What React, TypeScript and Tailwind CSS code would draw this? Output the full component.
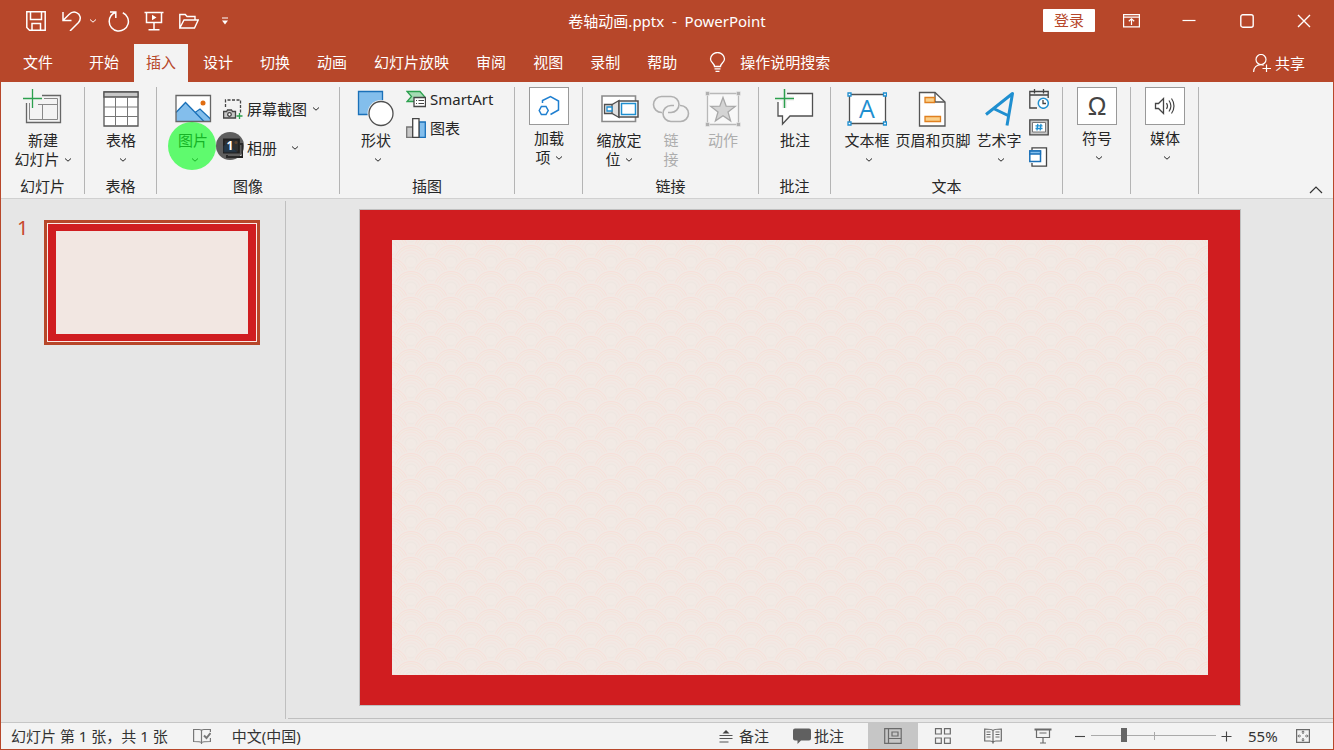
import { useState } from 'react';
import type { ReactNode } from 'react';

const TABS = ['开始', '插入', '设计', '切换', '动画', '幻灯片放映', '审阅', '视图', '录制', '帮助'];

function Chevron() {
  return (
    <svg className="inline-block h-1.5 w-2 shrink-0" viewBox="0 0 8 6" fill="none" stroke="currentColor" strokeWidth="1">
      <path d="M1 1.500 4 4.200 7 1.500" />
    </svg>
  );
}

function LargeIcon({ children }: { children: ReactNode }) {
  return (
    <svg className="h-[38px] w-10 shrink-0" viewBox="0 0 40 38" fill="none" stroke="#505050" strokeWidth="1.300">
      {children}
    </svg>
  );
}

function SmallIcon({ children }: { children: ReactNode }) {
  return (
    <svg className="h-5 w-5 shrink-0" viewBox="0 0 20 20" fill="none" stroke="#444" strokeWidth="1.300">
      {children}
    </svg>
  );
}

function Group({ label, className, children }: { label?: string; className: string; children: ReactNode }) {
  return (
    <section className={`relative flex h-[107px] shrink-0 flex-col border-r border-[#b4b4b4] ${className}`}>
      <div className="flex flex-1 items-start">{children}</div>
      {label && <h2 className="absolute inset-x-0 bottom-0 text-center leading-4">{label}</h2>}
    </section>
  );
}

function LargeButton({
  icon,
  label,
  second,
  menu,
  boxed,
  disabled,
  className = 'w-14',
}: {
  icon: ReactNode;
  label: string;
  second?: string;
  menu?: boolean;
  boxed?: boolean;
  disabled?: boolean;
  className?: string;
}) {
  return (
    <button
      disabled={disabled}
      className={`flex shrink-0 flex-col items-center whitespace-nowrap leading-[19px] disabled:text-[#adadad] ${boxed ? '' : 'pt-0.5'} ${className}`}
    >
      {boxed ? <span className="flex border border-[#999] bg-white">{icon}</span> : icon}
      <span className="mt-1">{label}</span>
      {(second || menu) && (
        <span className={`flex h-[19px] items-center gap-1 ${second ? '' : 'pl-1'}`}>
          {second}
          {menu && <Chevron />}
        </span>
      )}
    </button>
  );
}

function SmallButton({ icon, label, className = '' }: { icon: ReactNode; label: string; className?: string }) {
  return (
    <button className={`flex items-center gap-1 whitespace-nowrap ${className}`}>
      {icon}
      <span>{label}</span>
    </button>
  );
}

function TitleBar() {
  return (
    <header className="grid h-[43px] grid-cols-[1fr_auto_1fr] items-center pb-1">
      <div className="flex items-center pl-[25px]">
        <button aria-label="保存">
          <svg className="h-5 w-5" viewBox="0 0 20 20" fill="none" stroke="#fff" strokeWidth="1.500">
            <path d="M.8.8H19.2V19.2H3.5L.8 16.5ZM4.500 1v7.500h11V1M6 19v-6.500h8.500V19" />
          </svg>
        </button>
        <button aria-label="撤消" className="ml-4">
          <svg className="h-5 w-5" viewBox="0 0 20 20" fill="none" stroke="#fff" strokeWidth="1.500">
            <path d="M1 1v8.500h8.500M1.500 9 7 3.500C9 1.500 12 .6 14.500 1.600 18.500 3.200 19.500 8 16.500 11.500L8 20" />
          </svg>
        </button>
        <button aria-label="撤消列表" className="ml-[7px] flex text-white">
          <Chevron />
        </button>
        <button aria-label="恢复" className="ml-[11px]">
          <svg className="h-[22px] w-[22px]" viewBox="0 0 22 22" fill="none" stroke="#fff" strokeWidth="1.500">
            <path d="M2 2h5.800v6M7.500 2.500C3.500 4 1.200 7.500 1.200 11.500a9.600 9.600 0 1 0 13.600-8.800" />
          </svg>
        </button>
        <button aria-label="从头开始" className="ml-3.5">
          <svg className="h-5 w-5" viewBox="0 0 20 20" fill="none" stroke="#fff" strokeWidth="1.500">
            <path d="M.5 1.500h19M2.500 2v9.500h15V2M10 11.500v7M4.500 18.800h11" />
            <path d="M8 3.800v5.400L12.500 6.500Z" fill="#fff" stroke="none" />
          </svg>
        </button>
        <button aria-label="打开" className="ml-[15px]">
          <svg className="h-5 w-5" viewBox="0 0 20 20" fill="none" stroke="#fff" strokeWidth="1.400">
            <path d="M.8 17V3.500h5.500L8 5.500h8V9M.8 17 5 9h14.200l-3.700 8Z" />
          </svg>
        </button>
        <button aria-label="自定义快速访问工具栏" className="ml-[22px]">
          <svg className="h-2 w-2" viewBox="0 0 8 8">
            <path d="M1 .5h6v1H1zM1 3.500h6L4 7.500Z" fill="#fff" />
          </svg>
        </button>
      </div>
      <h1 className="whitespace-pre">{'卷轴动画.pptx  -  PowerPoint'}</h1>
      <div className="flex items-center justify-end pr-[22px]">
        <button className="mr-7 h-[23px] w-[52px] rounded-[1px] bg-white leading-[23px] text-[#b7472a]">登录</button>
        <button aria-label="功能区显示选项" className="mr-[42px]">
          <svg className="h-4 w-[17px]" viewBox="0 0 17 16" fill="none" stroke="#fff" strokeWidth="1.200">
            <path d="M.6 1.600h15.800v12.300H.6ZM.6 4.200h15.800M8.500 12V6M5.800 8.300 8.500 5.800l2.700 2.500" />
          </svg>
        </button>
        <button aria-label="最小化" className="mr-11">
          <svg className="h-3.5 w-3.5" viewBox="0 0 14 14" stroke="#fff" strokeWidth="1.200">
            <path d="M.5 6.500h13" />
          </svg>
        </button>
        <button aria-label="最大化" className="mr-[43px]">
          <svg className="h-3.5 w-3.5" viewBox="0 0 14 14" fill="none" stroke="#fff" strokeWidth="1.400">
            <rect x=".8" y=".8" width="12.400" height="12.400" rx="2" />
          </svg>
        </button>
        <button aria-label="关闭">
          <svg className="h-3.5 w-3.5" viewBox="0 0 14 14" stroke="#fff" strokeWidth="1.400">
            <path d="m1 1 12 12M13 1 1 13" />
          </svg>
        </button>
      </div>
    </header>
  );
}

function TabBar({ active, onSelect }: { active: string; onSelect: (tab: string) => void }) {
  return (
    <nav className="flex h-[38px] items-stretch gap-[3px] whitespace-nowrap pl-2.5 pr-7">
      <button className="mr-[9px] px-3 pb-0.5">文件</button>
      {TABS.map((tab) => (
        <button
          key={tab}
          onClick={() => onSelect(tab)}
          className={`px-3 pb-0.5 ${tab === active ? 'bg-[#f3f3f3] text-[#b7472a]' : ''}`}
        >
          {tab}
        </button>
      ))}
      <button className="ml-[17px] flex items-center gap-3.5 pb-0.5">
        <svg className="h-5 w-[17px]" viewBox="0 0 17 20" fill="none" stroke="#fff" strokeWidth="1.300">
          <path d="M5.500 14.500C5.500 11.500 1.500 10.500 1.500 7a7 6.500 0 0 1 14 0c0 3.500-4 4.500-4 7.500ZM5.500 16.800h6M6.500 19.300h4" />
        </svg>
        操作说明搜索
      </button>
      <button className="ml-auto flex items-center gap-1">
        <svg className="h-[18px] w-[18px]" viewBox="0 0 18 18" fill="none" stroke="#fff" strokeWidth="1.200">
          <circle cx="8" cy="5.500" r="5" />
          <path d="M.6 18c0-4.500 3-7.300 7.400-7.300 1 0 2 .2 2.700.5M9.500 14.500H18M13.500 10.500V18" />
        </svg>
        共享
      </button>
    </nav>
  );
}

function Ribbon() {
  return (
    <div className="flex h-[117px] border-b border-[#d0d0d0] bg-[#f3f3f3] pt-[5px] text-[#262626]">
      <Group label="幻灯片" className="w-[84px] pl-1">
        <LargeButton
          className="w-[76px]"
          label="新建"
          second="幻灯片"
          menu
          icon={
            <LargeIcon>
              <path d="M19 6.500h18.500v27h-34V14" stroke="#666" />
              <path d="M21 9.500h13.500v21h-28V14M15 15.500h20M19.500 15.500v15" stroke="#888" strokeWidth="1" />
              <path d="M9.500 0v19M0 9.500h19" stroke="#2ca04e" />
            </LargeIcon>
          }
        />
      </Group>
      <Group label="表格" className="w-[72px] pl-2">
        <LargeButton
          label="表格"
          menu
          icon={
            <LargeIcon>
              <path d="M3 3h34v34H3Z" fill="#fff" stroke="#555" />
              <path d="M3 3h34v5H3Z" fill="#c8c8c8" stroke="#555" />
              <path d="M3 18h34M3 27.500h34M14.500 8v29M26.500 8v29" stroke="#777" strokeWidth="1" />
            </LargeIcon>
          }
        />
      </Group>
      <Group label="图像" className="w-[183px] pl-2">
        <LargeButton
          label="图片"
          menu
          icon={
            <LargeIcon>
              <path d="M3 6.500h34.500v26H3Z" fill="#fff" stroke="none" />
              <path d="M3 23.500 12.500 13.500 31 32.500H3Z" fill="#83beec" stroke="none" />
              <path d="m22 24 5-4 10.500 10v2.500H31Z" fill="#83beec" stroke="none" />
              <path d="M3 23.500 12.500 13.500 31 32.500M22 23.500l5-3.500 10.500 10" stroke="#1a70b8" />
              <path d="M3 6.500h34.500v26H3Z" stroke="#666" />
              <circle cx="30" cy="14" r="2.500" fill="#e06c10" stroke="none" />
            </LargeIcon>
          }
        />
        <div className="flex flex-col pl-0.5 pt-0.5">
          <div className="flex h-10 items-center gap-[5px]">
            <SmallButton
              label="屏幕截图"
              icon={
                <SmallIcon>
                  <path d="M2.500 8V1h15v13" strokeDasharray="3 1.500" />
                  <path d="M.6 12.500h3L4.500 11h4l1 1.500h3v6.500H.6Z" fill="#c8c8c8" />
                  <circle cx="6.500" cy="15.500" r="1.800" fill="#fff" />
                  <path d="M16.500 14v6M13.500 17h6" stroke="#2ca04e" />
                </SmallIcon>
              }
            />
            <button aria-label="屏幕截图选项" className="flex">
              <Chevron />
            </button>
          </div>
          <div className="flex h-[38px] items-center gap-3.5">
            <SmallButton
              label="相册"
              icon={
                <SmallIcon>
                  <path d="M4 17v2h15.500V6H17" stroke="#222" strokeWidth="2" />
                  <path d="M.8 1.500H16V14.500H.8Z" fill="#3a3a3a" stroke="#000" strokeWidth="1.800" />
                  <path d="m1 8 4-3 9 9H1Z" fill="#0f5e9c" stroke="#0a3d6b" strokeWidth="1" />
                  <circle cx="13" cy="4.500" r="1.500" fill="#f08030" stroke="none" />
                </SmallIcon>
              }
            />
            <button aria-label="相册选项" className="flex">
              <Chevron />
            </button>
          </div>
        </div>
        {/* click highlight and its step badge */}
        <span className="pointer-events-none absolute left-[11px] top-[35px] h-12 w-12 rounded-full bg-[#0ffe26]/65" />
        <span className="pointer-events-none absolute left-[59px] top-[45px] flex h-7 w-7 items-center justify-center rounded-full bg-[#2c2c2c]/75 text-xs font-bold text-white">
          1
        </span>
      </Group>
      <Group label="插图" className="w-[175px] pl-2">
        <LargeButton
          label="形状"
          menu
          icon={
            <LargeIcon>
              <path d="M2.500 2.500h24v23h-24Z" fill="#83beec" stroke="#1a70b8" />
              <circle cx="25" cy="24.500" r="13.500" fill="#f3f3f3" stroke="none" />
              <circle cx="25" cy="24.500" r="12" fill="#fff" />
            </LargeIcon>
          }
        />
        <div className="flex flex-col gap-[5px] pl-0.5">
          <SmallButton
            className="h-6"
            label="SmartArt"
            icon={
              <SmallIcon>
                <path d="M1 2.500h13l4.500 5-2.500 5H1L5.500 7.500Z" fill="#a5dcb4" stroke="#2ca04e" />
                <path d="M8 8.500h11.500v9H8Z" fill="#fff" />
                <path d="M10 11.500h1M12.500 11.500H18M10 14.500h1M12.500 14.500H18" strokeWidth="1" />
              </SmallIcon>
            }
          />
          <SmallButton
            className="h-6"
            label="图表"
            icon={
              <SmallIcon>
                <path d="M.7 9h6v10.300h-6Z" fill="#c8c8c8" stroke="#777" />
                <path d="M13 4h6.300v15.300H13Z" fill="#83beec" stroke="#1a70b8" />
                <path d="M6.700.7H13v18.600H6.700Z" fill="#fff" />
              </SmallIcon>
            }
          />
        </div>
      </Group>
      <Group className="w-[68px] pl-1.5">
        <LargeButton
          boxed
          label="加载"
          second="项"
          menu
          icon={
            <svg className="h-9 w-[38px]" viewBox="0 0 38 36" fill="none" stroke="#1f7fd0" strokeWidth="1.500">
              <path d="M12.500 15v-2.500L20.500 8.500 28.500 13v9L20.500 26.500" />
              <path d="m9.200 22.500 2.200-4h4.600l2.200 4-2.200 4h-4.600Z" />
            </svg>
          }
        />
      </Group>
      <Group label="链接" className="w-[176px] pl-2">
        <LargeButton
          label="缩放定"
          second="位"
          menu
          icon={
            <LargeIcon>
              <path d="M3 7h33.500v25.500H3Z" fill="#fff" stroke="#8a8a8a" strokeWidth="1.600" />
              <path d="M5.500 15.500H13l7-4v17l-7-4H5.500Z" fill="#e0e0e0" />
              <path d="M13 15.500v9" />
              <path d="M8 18h5v4H8Z" fill="#fff" stroke="#1f8fd0" />
              <path d="M20 12h19v16H20Z" fill="#fff" strokeWidth="1.500" />
              <path d="M22.500 14.500h14v11h-14Z" stroke="#1f8fd0" strokeWidth="1.500" />
            </LargeIcon>
          }
        />
        <LargeButton
          disabled
          className="w-12"
          label="链"
          second="接"
          icon={
            <LargeIcon>
              <g stroke="#b0b0b0" strokeWidth="1.600">
                <path d="M11 23.500h-.5a8 8 0 0 1 0-16h9.500a8 8 0 0 1 0 16h-3" />
                <path d="M23 16.500h-3a8 8 0 0 0 0 16h9.500a8 8 0 0 0 0-16H29" />
              </g>
            </LargeIcon>
          }
        />
        <LargeButton
          disabled
          label="动作"
          icon={
            <LargeIcon>
              <path d="M4.500 4.500h31v31h-31Z" stroke="#b8b8b8" fill="#f8f8f8" />
              <path d="m20 8.500 3.200 8.700 9 .2-7.200 5.500 2.600 9L20 26.800l-7.600 5.100 2.600-9-7.200-5.500 9-.2Z" fill="#d4d4d4" stroke="#a8a8a8" />
              <path d="M2.500 2.500h4v4h-4ZM33.500 2.500h4v4h-4ZM2.500 33.500h4v4h-4ZM33.500 33.500h4v4h-4Z" fill="#b0b0b0" stroke="#f3f3f3" strokeWidth=".5" />
            </LargeIcon>
          }
        />
      </Group>
      <Group label="批注" className="w-[72px] pl-2">
        <LargeButton
          label="批注"
          icon={
            <LargeIcon>
              <path d="M12 4.500h25.500v22.500H15l-7.500 8v-8H3V13" fill="#fff" />
              <path d="M9.500 0v19M0 9.500h19" stroke="#f3f3f3" strokeWidth="5" />
              <path d="M9.500 0v19M0 9.500h19" stroke="#2ca04e" strokeWidth="1.500" />
            </LargeIcon>
          }
        />
      </Group>
      <Group label="文本" className="w-[232px] pl-3">
        <div className="flex gap-0.5">
          <LargeButton
            className="w-12"
            label="文本框"
            menu
            icon={
              <LargeIcon>
                <path d="M2.500 5.500h36v29h-36Z" fill="#fff" />
                <path d="M1 4h3v3H1ZM36.500 4h3v3h-3ZM1 33h3v3H1ZM36.500 33h3v3h-3Z" fill="#fff" stroke="#1f8fd0" />
                <text x="20" y="29" textAnchor="middle" fontSize="25" fontFamily="Open Sans, sans-serif" fill="#1f8fd0" stroke="none">
                  A
                </text>
              </LargeIcon>
            }
          />
          <LargeButton
            className="w-20"
            label="页眉和页脚"
            icon={
              <LargeIcon>
                <path d="M6.500 3.500H22l10 9.500v24H6.500Z" fill="#fff" stroke="#555" />
                <path d="M22 3.500V13h10" stroke="#555" />
                <path d="M12 8.500h9.500v5H12ZM12 27.500h15.500v5H12Z" fill="#fbd08a" stroke="#e08020" />
              </LargeIcon>
            }
          />
          <LargeButton
            className="w-12"
            label="艺术字"
            menu
            icon={
              <LargeIcon>
                <path d="M7 25.500 33.500 4.500 28 36.500M14.500 19.500 30 27" stroke="#1f8fd0" strokeWidth="3" strokeLinejoin="round" />
              </LargeIcon>
            }
          />
        </div>
        <div className="flex flex-col gap-[9px] pl-1.5 pt-0.5">
          <button aria-label="日期和时间" className="flex">
            <SmallIcon>
              <path d="M8 19H.8V2.500h18.400V9M.8 6h18.400M5.500 0v4.500M14.500 0v4.500" />
              <circle cx="14.300" cy="14.300" r="5" fill="#fff" stroke="#1f8fd0" strokeWidth="1.500" />
              <path d="M14 11v3.500h3" />
            </SmallIcon>
          </button>
          <button aria-label="幻灯片编号" className="flex">
            <SmallIcon>
              <path d="M.8 1.800h18.400v15H.8Z" fill="#c8c8c8" />
              <path d="M3.500 4.500h13v9.500h-13Z" fill="#fff" stroke="#777" strokeWidth="1" />
              <path d="M8.800 5.800 8 12.500M12 5.800l-.8 6.700M6.500 7.800h7M6.500 10.500h7" stroke="#1f8fd0" />
            </SmallIcon>
          </button>
          <button aria-label="对象" className="flex">
            <SmallIcon>
              <path d="M3 3V.8h14.500v18.400H3V16" fill="#fff" />
              <path d="M.8 4h10.700v10.500H.8Z" fill="#fff" stroke="#1a70b8" strokeWidth="1.500" />
              <path d="M.8 4h10.700v3H.8Z" fill="#83beec" stroke="#1a70b8" />
            </SmallIcon>
          </button>
        </div>
      </Group>
      <Group className="w-[68px] pl-1.5">
        <LargeButton
          boxed
          label="符号"
          menu
          icon={
            <svg className="h-9 w-[38px]" viewBox="0 0 38 36">
              <text x="19" y="27" textAnchor="middle" fontSize="25" fontFamily="Liberation Sans, sans-serif" fill="#444">
                Ω
              </text>
            </svg>
          }
        />
      </Group>
      <Group className="w-[68px] pl-1.5">
        <LargeButton
          boxed
          label="媒体"
          menu
          icon={
            <svg className="h-9 w-[38px]" viewBox="0 0 38 36" fill="none" stroke="#444" strokeWidth="1.300">
              <path d="M9.500 15.500h3l5-5v15l-5-5h-3Z" />
              <path d="M20.500 15c1.200 1.800 1.200 4.200 0 6M23 12.500c2.300 3.300 2.300 7.700 0 11M25.500 10.500c3.300 4.500 3.300 10.500 0 15" strokeWidth="1.200" />
            </svg>
          }
        />
      </Group>
      <button aria-label="折叠功能区" className="ml-auto mr-2.5 self-end pb-1">
        <svg className="h-2 w-3.5" viewBox="0 0 14 8" fill="none" stroke="#333" strokeWidth="1.200">
          <path d="m1 7 6-6 6 6" />
        </svg>
      </button>
    </div>
  );
}

// One scale of the wave paper: peach arcs outside, pale rings in the middle
function Fan({ x, y }: { x: number; y: number }) {
  return (
    <g transform={`translate(${x} ${y})`} fill="none">
      <circle r="19" fill="#f2e9e4" />
      <circle r="16.500" stroke="#f8dfd9" />
      <circle r="14.500" stroke="#f5e4d9" />
      <circle r="12" stroke="#f6e3de" />
      <circle r="9" stroke="#f2e5e0" />
      <circle r="6" stroke="#ede7e1" />
      <circle r="3.500" stroke="#f2ece6" />
    </g>
  );
}

function WavePaper() {
  return (
    <svg className="block h-full w-full" aria-hidden="true">
      <defs>
        <pattern id="waves" width="40" height="26" patternUnits="userSpaceOnUse">
          <rect width="40" height="26" fill="#f2e9e4" />
          {[-4, 9, 22, 35, 48].map((y, row) =>
            (row % 2 ? [-1, 39] : [-21, 19, 59]).map((x) => <Fan key={`${x}-${y}`} x={x} y={y} />),
          )}
        </pattern>
      </defs>
      <rect width="100%" height="100%" fill="url(#waves)" />
    </svg>
  );
}

function Workspace() {
  return (
    <main className="flex flex-1 bg-[#e6e6e6] pb-[3px] pt-0.5">
      <aside className="flex w-[285px] shrink-0 items-start border-r border-[#bfbfbf] pl-4 pt-[19px]">
        <span className="w-[27px] text-xl leading-4 text-[#c8472a]">1</span>
        <button aria-label="幻灯片 1" className="w-[216px] border-3 border-[#b7472a] bg-[#fbe9e6] p-px">
          <span className="block h-[117px] border-x-8 border-y-[7px] border-[#d01d20] bg-[#f2e7e2]" />
        </button>
      </aside>
      <div className="ml-0.5 flex-1 border-b border-[#bfbfbf] pb-2 pl-[71px] pr-[92px] pt-2">
        <div className="border border-[#bfbfbf]">
          <div className="aspect-video bg-[#d01d20] px-8 py-[30px]">
            <WavePaper />
          </div>
        </div>
      </div>
    </main>
  );
}

function StatusBar() {
  const [zoom, setZoom] = useState(55);
  return (
    <footer className="flex h-[27px] items-center whitespace-nowrap border-t border-[#c6c6c6] bg-[#f3f3f3] pb-px text-[#333]">
      <span className="pl-2.5">幻灯片 第 1 张，共 1 张</span>
      <button aria-label="拼写检查" className="ml-[25px]">
        <svg className="h-4 w-[18px]" viewBox="0 0 18 16" fill="none" stroke="#777" strokeWidth="1.200">
          <path d="M8.500 14.500C7.500 13.500 6.500 13.500.6 13.500V1.500h5.500c1.500 0 2.400.5 2.400 1.500v13M8.500 3c0-1 .8-1.500 2.400-1.500h6.500V4M8.500 14.500c1-1 2-1 8.900-1V10" />
          <path d="m11 7.500 2.500 2.500 4-5" strokeWidth="2" />
        </svg>
      </button>
      <button className="ml-[21px]">中文(中国)</button>
      <button className="ml-auto flex items-center gap-1.5">
        <svg className="h-3.5 w-3.5" viewBox="0 0 14 14" fill="none" stroke="#555" strokeWidth="1.200">
          <path d="M3.500 4.500 7 1l3.500 3.500Z" fill="#444" stroke="none" />
          <path d="M.5 6.500h13M.5 9.500h13M.5 13h9" />
        </svg>
        备注
      </button>
      <button className="ml-6 flex items-center gap-[3px]">
        <svg className="h-4 w-[18px]" viewBox="0 0 18 16" fill="#606060">
          <path d="M2 .5h14a2 2 0 0 1 2 2v8a2 2 0 0 1-2 2H8L4.500 16v-3.500H2a2 2 0 0 1-2-2v-8a2 2 0 0 1 2-2Z" />
        </svg>
        批注
      </button>
      <button aria-label="普通视图" className="-mb-px ml-6 flex w-[50px] items-center justify-center self-stretch bg-[#c6c6c6]">
        <svg className="h-4 w-[18px]" viewBox="0 0 18 16" fill="none" stroke="#6a6a6a" strokeWidth="1.200">
          <path d="M.7.700h16.500v14.600H.7ZM4.500.7v14.600M4.500 10.500h12.700M8 4h6v4H8Z" />
        </svg>
      </button>
      <button aria-label="幻灯片浏览" className="flex h-full w-[50px] items-center justify-center">
        <svg className="h-4 w-[18px]" viewBox="0 0 18 16" fill="none" stroke="#6a6a6a" strokeWidth="1.200">
          <path d="M1.500.7h5.800v5.300H1.500ZM10.500.7h5.800v5.300h-5.800ZM1.500 10h5.800v5.300H1.500ZM10.500 10h5.800v5.300h-5.800Z" />
        </svg>
      </button>
      <button aria-label="阅读视图" className="flex h-full w-[50px] items-center justify-center">
        <svg className="h-4 w-[18px]" viewBox="0 0 18 16" fill="none" stroke="#6a6a6a" strokeWidth="1.200">
          <path d="M9 2.500C8 1.200 7 1 .7 1v12H6c1.500 0 2.500.3 3 1.500.5-1.200 1.500-1.500 3-1.500h5.300V1C11 1 10 1.200 9 2.500v13M2.500 4h4M2.500 6.500h4M2.500 9h4M11.500 4h4M11.500 6.500h4M11.500 9h4" />
        </svg>
      </button>
      <button aria-label="幻灯片放映" className="flex h-full w-[50px] items-center justify-center">
        <svg className="h-4 w-[18px]" viewBox="0 0 18 16" fill="none" stroke="#6a6a6a" strokeWidth="1.200">
          <path d="M.5 1.500h17" strokeWidth="2" />
          <path d="M2.500 2v7.500h13V2M5.500 5h7M9 9.500v5M6 15h6" />
        </svg>
      </button>
      <button aria-label="缩小" className="ml-1.5" onClick={() => setZoom(Math.max(10, zoom - 5))}>
        <svg className="h-3 w-3" viewBox="0 0 12 12" stroke="#444" strokeWidth="1.100">
          <path d="M1 6.500h10" />
        </svg>
      </button>
      <div className="relative ml-[5px] mr-1 flex w-[125px] items-center">
        <span className="absolute left-1/2 h-2 w-px bg-[#aaa]" />
        <input
          type="range"
          aria-label="显示比例"
          min={10}
          max={190}
          value={zoom}
          onChange={(e) => setZoom(Number(e.target.value))}
          className="relative h-3.5 w-full appearance-none bg-transparent [&::-webkit-slider-runnable-track]:h-px [&::-webkit-slider-runnable-track]:bg-[#aaa] [&::-webkit-slider-thumb]:-mt-[7px] [&::-webkit-slider-thumb]:h-3.5 [&::-webkit-slider-thumb]:w-1.5 [&::-webkit-slider-thumb]:appearance-none [&::-webkit-slider-thumb]:bg-[#666]"
        />
      </div>
      <button aria-label="放大" onClick={() => setZoom(Math.min(190, zoom + 5))}>
        <svg className="h-3 w-3" viewBox="0 0 12 12" stroke="#444" strokeWidth="1.100">
          <path d="M1.500 6.500h10M6.500 1.500v10" />
        </svg>
      </button>
      <button className="ml-4 w-8 text-left">{zoom}%</button>
      <button aria-label="使幻灯片适应当前窗口" className="ml-4 mr-[23px]">
        <svg className="h-3.5 w-3.5" viewBox="0 0 14 14" fill="none" stroke="#6a6a6a" strokeWidth="1.200">
          <path d="M.6.600h12.800v12.800H.6ZM7 2v3M7 9v3M2 7h3M9 7h3" />
          <path d="M5.500 3.300 7 1.800l1.500 1.500M5.500 10.700 7 12.200l1.500-1.500M3.300 5.500 1.800 7l1.500 1.500M10.700 5.500 12.200 7l-1.500 1.500" strokeWidth=".8" />
        </svg>
      </button>
    </footer>
  );
}

export default function App() {
  const [tab, setTab] = useState('插入');
  return (
    <div className="flex min-h-screen flex-col border border-[#b7472a] bg-[#b7472a] font-['Noto_Sans','Noto_Sans_CJK_SC',sans-serif] text-[15px] leading-5 text-white">
      <TitleBar />
      <TabBar active={tab} onSelect={setTab} />
      <Ribbon />
      <Workspace />
      <StatusBar />
    </div>
  );
}
